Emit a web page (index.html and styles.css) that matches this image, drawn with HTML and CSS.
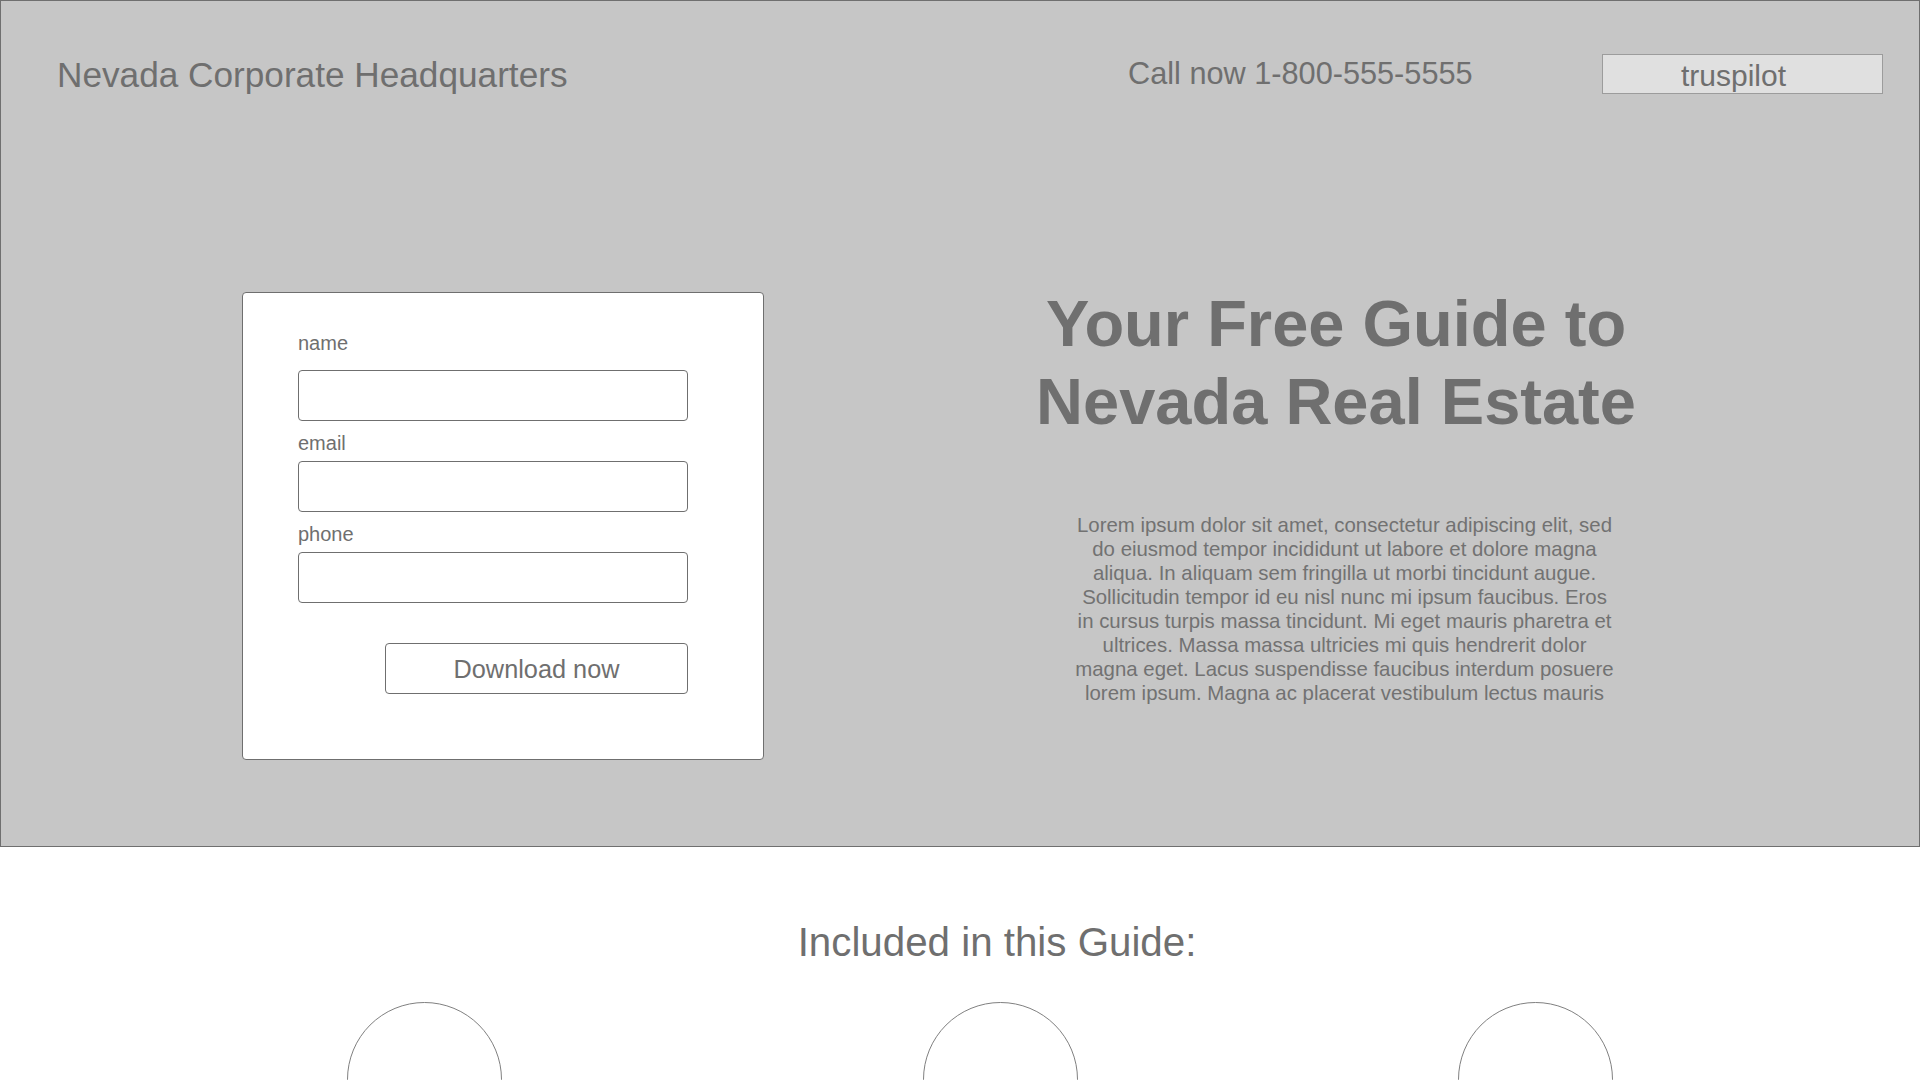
FILE: index.html
```html
<!DOCTYPE html>
<html lang="en">
<head>
<meta charset="utf-8">
<title>Nevada Real Estate Guide</title>
<link rel="stylesheet" href="styles.css">
</head>
<body>
<div class="page">
  <section class="hero">
    <header class="topbar">
      <div class="brand">Nevada Corporate Headquarters</div>
      <div class="phone">Call now 1-800-555-5555</div>
      <div class="trust">truspilot</div>
    </header>
    <div class="hero-main">
      <form class="lead-card">
        <label class="field-label field-label-first" for="f-name">name</label>
        <input class="field" id="f-name" type="text">
        <label class="field-label" for="f-email">email</label>
        <input class="field" id="f-email" type="text">
        <label class="field-label" for="f-phone">phone</label>
        <input class="field" id="f-phone" type="text">
        <button class="submit" type="button">Download now</button>
      </form>
      <div class="pitch">
        <h1 class="pitch-title">Your Free Guide to<br>Nevada Real Estate</h1>
        <p class="pitch-text">Lorem ipsum dolor sit amet, consectetur adipiscing elit, sed<br>do eiusmod tempor incididunt ut labore et dolore magna<br>aliqua. In aliquam sem fringilla ut morbi tincidunt augue.<br>Sollicitudin tempor id eu nisl nunc mi ipsum faucibus. Eros<br>in cursus turpis massa tincidunt. Mi eget mauris pharetra et<br>ultrices. Massa massa ultricies mi quis hendrerit dolor<br>magna eget. Lacus suspendisse faucibus interdum posuere<br>lorem ipsum. Magna ac placerat vestibulum lectus mauris</p>
      </div>
    </div>
  </section>
  <section class="included">
    <h2 class="included-title">Included in this Guide:</h2>
    <div class="circle-row">
      <div class="circle"></div>
      <div class="circle circle-mid"></div>
      <div class="circle circle-last"></div>
    </div>
  </section>
</div>
</body>
</html>
```

FILE: styles.css
```css
html, body {
  margin: 0;
  padding: 0;
  background: #ffffff;
}

body {
  font-family: "Liberation Sans", Arial, Helvetica, sans-serif;
  color: #6f6f6f;
}

.page {
  width: 1920px;
  height: 1080px;
  overflow: hidden;
}

.hero {
  box-sizing: border-box;
  height: 847px;
  border: 1px solid #6f6f6f;
  background: #c6c6c6;
}

.topbar {
  display: flex;
  align-items: flex-start;
  height: 95px;
  box-sizing: border-box;
  padding: 51px 36px 0 56px;
}

.brand {
  flex: 1;
  margin-top: 1px;
  font-size: 35.2px;
  line-height: 44px;
}

.phone {
  width: 474px;
  margin-top: 2px;
  font-size: 30.7px;
  line-height: 40px;
}

.trust {
  box-sizing: border-box;
  width: 281px;
  height: 40px;
  margin-top: 2px;
  padding: 3px 18px 0 0;
  border: 1px solid #9c9c9c;
  background: #e0e0e0;
  font-size: 30px;
  line-height: 35px;
  text-align: center;
}

.hero-main {
  display: flex;
  align-items: flex-start;
  margin-top: 189px;
  padding-left: 241px;
}

.lead-card {
  box-sizing: border-box;
  display: flex;
  flex-direction: column;
  width: 522px;
  margin: 7px 0 0;
  padding: 38px 75px 65px 55px;
  background: #ffffff;
  border: 1px solid #6f6f6f;
  border-radius: 4px;
}

.field-label {
  font-size: 20px;
  line-height: 24px;
  margin: 10px 0 6px;
}

.field-label-first {
  margin: 0 0 15px;
}

.field {
  box-sizing: border-box;
  width: 390px;
  height: 51px;
  margin: 0;
  padding: 0 10px;
  border: 1px solid #6f6f6f;
  border-radius: 4px;
  background: #ffffff;
  font-family: inherit;
  font-size: 18px;
  color: #6f6f6f;
  outline: none;
}

.submit {
  box-sizing: border-box;
  align-self: flex-end;
  width: 303px;
  height: 51px;
  margin-top: 40px;
  padding: 2px 0 0;
  border: 1px solid #6f6f6f;
  border-radius: 4px;
  background: #ffffff;
  font-family: inherit;
  font-size: 25.3px;
  line-height: 47px;
  color: #6f6f6f;
}

.pitch {
  width: 700px;
  margin-left: 222px;
}

.pitch-title {
  margin: 0;
  font-size: 65px;
  line-height: 78px;
  font-weight: 700;
  text-align: center;
  color: #6f6f6f;
}

.pitch-text {
  margin: 72px 0 0;
  padding-left: 17px;
  font-size: 20.4px;
  line-height: 24px;
  text-align: center;
  color: #727272;
}

.included-title {
  margin: 72px 0 0;
  padding-left: 74px;
  font-size: 40.3px;
  line-height: 48px;
  font-weight: 400;
  text-align: center;
  color: #6f6f6f;
}

.circle-row {
  display: flex;
  margin-top: 35px;
  padding-left: 347px;
}

.circle {
  box-sizing: border-box;
  flex: none;
  width: 155px;
  height: 155px;
  border: 1px solid #808080;
  border-radius: 50%;
}

.circle-mid {
  margin-left: 421px;
}

.circle-last {
  margin-left: 380px;
}
```
